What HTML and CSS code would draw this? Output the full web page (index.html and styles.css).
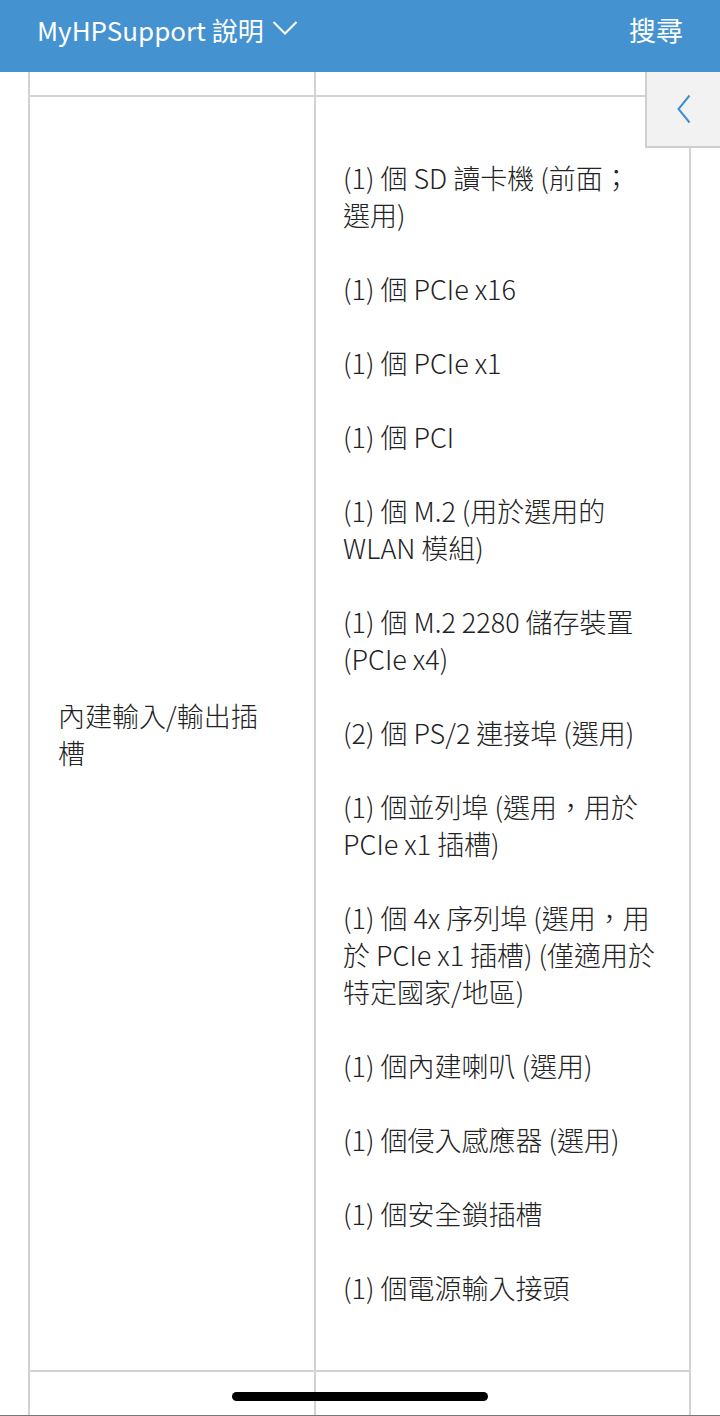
FILE: index.html
```html
<!DOCTYPE html>
<html lang="zh-Hant">
<head>
<meta charset="utf-8">
<title>MyHPSupport 說明</title>
<link rel="stylesheet" href="styles.css">
</head>
<body>
<header class="topbar">
  <div class="brand">MyHPSupport 說明
    <svg class="caret" width="26" height="16" viewBox="0 0 26 16"><path d="M1.5 2 L13 13.5 L24.5 2" fill="none" stroke="#fff" stroke-width="2"/></svg>
  </div>
  <div class="search">搜尋</div>
</header>

<div class="side-tab">
  <svg width="16" height="30" viewBox="0 0 16 30"><path d="M13.5 1.5 L2.5 15 L13.5 28.5" fill="none" stroke="#3b8fd4" stroke-width="2"/></svg>
</div>

<main class="content">
  <table class="spec">
    <tr class="row-partial"><td class="label"></td><td class="value"></td></tr>
    <tr>
      <td class="label">內建輸入/輸出插槽</td>
      <td class="value">
        <p>(1) 個 SD 讀卡機 (前面；<br>選用)</p>
        <p>(1) 個 PCIe x16</p>
        <p>(1) 個 PCIe x1</p>
        <p>(1) 個 PCI</p>
        <p>(1) 個 M.2 (用於選用的<br>WLAN 模組)</p>
        <p>(1) 個 M.2 2280 儲存裝置<br>(PCIe x4)</p>
        <p>(2) 個 PS/2 連接埠 (選用)</p>
        <p>(1) 個並列埠 (選用，用於<br>PCIe x1 插槽)</p>
        <p>(1) 個 4x 序列埠 (選用，用<br>於 PCIe x1 插槽) (僅適用於<br>特定國家/地區)</p>
        <p>(1) 個內建喇叭 (選用)</p>
        <p>(1) 個侵入感應器 (選用)</p>
        <p>(1) 個安全鎖插槽</p>
        <p>(1) 個電源輸入接頭</p>
      </td>
    </tr>
    <tr class="row-next"><td class="label"></td><td class="value"></td></tr>
  </table>
</main>

<div class="home-indicator"></div>
<div class="screen-edge"></div>
</body>
</html>
```

FILE: styles.css
```css
html, body {
  margin: 0;
  padding: 0;
  background: #fff;
}
body {
  font-family: "Noto Sans CJK TC", "Noto Sans", sans-serif;
  color: #222;
  width: 720px;
  height: 1416px;
  overflow: hidden;
  position: relative;
}
.topbar {
  height: 72px;
  background: #4592d0;
  color: #fff;
  display: flex;
  justify-content: space-between;
  align-items: flex-start;
  padding: 0 37px;
  box-sizing: border-box;
  font-size: 26px;
  font-weight: 400;
}
.brand {
  display: flex;
  align-items: center;
  gap: 8px;
  height: 58px;
}
.caret {
  margin-top: -2px;
}
.search {
  height: 58px;
  display: flex;
  align-items: center;
  font-size: 27px;
}
.side-tab {
  position: absolute;
  top: 72px;
  left: 645px;
  width: 80px;
  height: 76px;
  box-sizing: border-box;
  background: #f2f2f2;
  border-left: 2px solid #cfcfcf;
  border-bottom: 2px solid #cfcfcf;
  display: flex;
  align-items: center;
  padding-left: 29px;
}
.content {
  padding-left: 28px;
}
.spec {
  border-collapse: collapse;
  width: 663px;
  font-size: 27px;
  font-weight: 300;
  line-height: 37px;
}
.spec td {
  border: 2px solid #d2d2d2;
  padding: 0 28px;
}
.spec tr:first-child td {
  border-top: none;
}
.spec td.label {
  width: 207px;
  padding-right: 49px;
  vertical-align: middle;
}
.row-partial td {
  height: 23px;
}
.row-next td {
  height: 60px;
}
.spec td.value {
  padding-top: 25px;
  padding-bottom: 27px;
  padding-left: 27px;
  padding-right: 20px;
}
.row-partial td.value, .row-next td.value {
  padding: 0 28px;
}
.spec p {
  margin: 37px 0;
}
.home-indicator {
  position: absolute;
  left: 232px;
  top: 1392px;
  width: 256px;
  height: 9px;
  border-radius: 5px;
  background: #000;
}
.screen-edge {
  position: absolute;
  left: 0;
  bottom: 0;
  width: 720px;
  height: 1px;
  background: #777;
}
```
